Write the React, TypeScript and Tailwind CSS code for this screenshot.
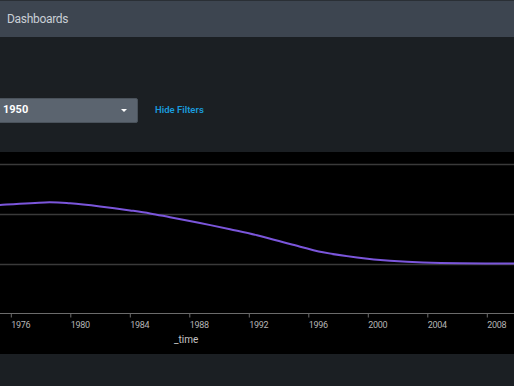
import React from 'react';

const points: [number, number][] = [
    [-20, 54.5], [0, 53], [45, 50.4], [70, 51.3], [100, 54.4], [130, 58.4], [150, 61.4],
    [170, 65.2], [200, 71], [230, 77.2], [257, 83.3], [290, 92], [323, 100.3],
    [357, 105.5], [390, 108.8], [423, 110.6], [460, 111.3], [514, 111.4], [540, 111.4],
];

// catmull-rom -> cubic bezier
const smoothPath = (pts: [number, number][]) => {
    let d = `M${pts[0][0]},${pts[0][1]}`;
    for (let i = 0; i < pts.length - 1; i++) {
        const p0 = pts[i - 1] || pts[i];
        const p1 = pts[i];
        const p2 = pts[i + 1];
        const p3 = pts[i + 2] || p2;
        const c1x = p1[0] + (p2[0] - p0[0]) / 6;
        const c1y = p1[1] + (p2[1] - p0[1]) / 6;
        const c2x = p2[0] - (p3[0] - p1[0]) / 6;
        const c2y = p2[1] - (p3[1] - p1[1]) / 6;
        d += ` C${c1x.toFixed(1)},${c1y.toFixed(1)} ${c2x.toFixed(1)},${c2y.toFixed(1)} ${p2[0]},${p2[1]}`;
    }
    return d;
};

const years = [1976, 1980, 1984, 1988, 1992, 1996, 2000, 2004, 2008];

const Chart: React.FC = () => (
    <svg width="514" height="202" viewBox="0 0 514 202" className="block">
        {[12.5, 62.5, 112.5].map((y) => (
            <line key={y} x1="0" x2="514" y1={y} y2={y} stroke="#3a3a3a" strokeWidth="1.5" />
        ))}
        <line x1="0" x2="514" y1="161.5" y2="161.5" stroke="#6b6b6b" strokeWidth="1" />
        {years.map((yr, i) => {
            const x = 11.3 + i * 59.5;
            return (
                <g key={yr}>
                    <line x1={x} x2={x} y1="161" y2="165.5" stroke="#6b6b6b" strokeWidth="1" />
                    <text x={x} y="176" fill="#b4b4b4" fontSize="9" letterSpacing="-0.3" fontFamily="Roboto, sans-serif">
                        {yr}
                    </text>
                </g>
            );
        })}
        <text x="174" y="191" fill="#c4c4c4" fontSize="10" fontFamily="Roboto, sans-serif">_time</text>
        <path d={smoothPath(points)} fill="none" stroke="#7b56db" strokeWidth="2" />
    </svg>
);

const App: React.FC = () => {
    return (
        <div className="w-[514px] h-[386px] overflow-hidden bg-[#1b1f23] font-['Roboto',sans-serif]">
            <div className="h-px bg-[#2a2f35]" />
            <div className="h-[36px] bg-[#3d4550] flex items-center px-[7px]">
                <span className="text-[12px] tracking-[-0.3px] text-[#c9cfd6]">Dashboards</span>
            </div>

            {/* Filters */}
            <div className="h-[115px] pt-[61px]">
                <div className="flex items-center">
                    <div className="-ml-[4px] w-[142px] h-[25px] bg-[#5b646f] border border-[#4a525b] rounded-[2px] flex items-center justify-between pl-[6px] pr-[10px]">
                        <span className="text-[11px] font-bold text-white">1950</span>
                        <span className="w-0 h-0 border-l-[3px] border-r-[3px] border-t-[3px] border-l-transparent border-r-transparent border-t-white" />
                    </div>
                    <button className="ml-[17px] text-[9.5px] font-semibold text-[#1a9bdc]">Hide Filters</button>
                </div>
            </div>

            {/* Chart panel */}
            <div className="h-[202px] bg-black">
                <Chart />
            </div>
        </div>
    );
};

export default App;
